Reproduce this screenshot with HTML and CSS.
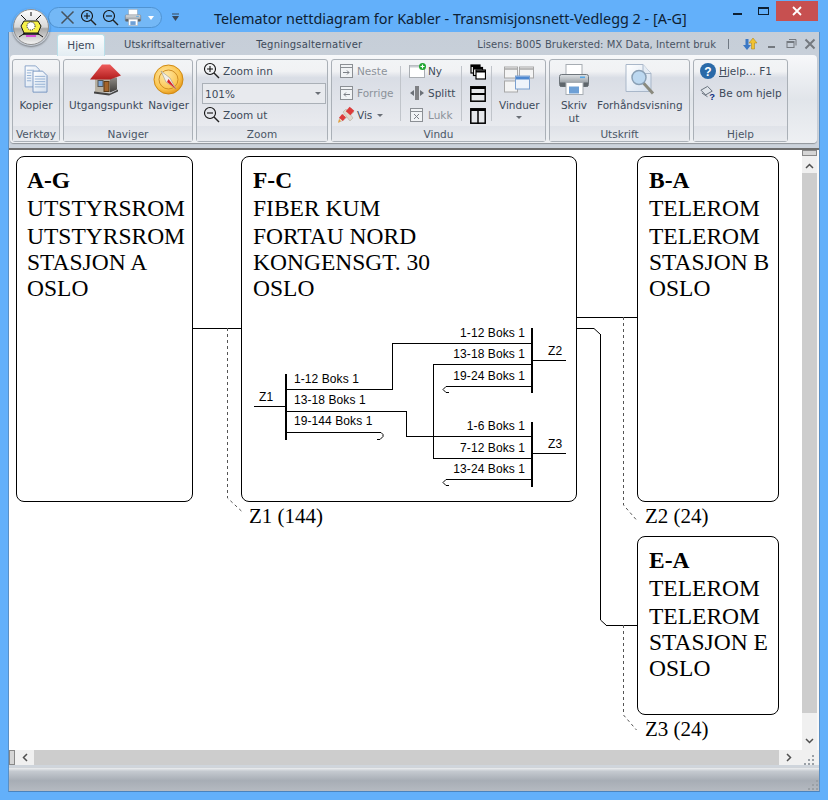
FILE: index.html
```html
<!DOCTYPE html>
<html lang="no">
<head>
<meta charset="utf-8">
<title>Telemator nettdiagram</title>
<link rel="stylesheet" href="styles.css">
</head>
<body>
<svg class="defs" width="0" height="0" aria-hidden="true">
  <defs>
    <linearGradient id="paper" x1="0" y1="0" x2="1" y2="1"><stop offset="0" stop-color="#fff"/><stop offset="1" stop-color="#d3dfee"/></linearGradient>
    <linearGradient id="roof" x1="0" y1="0" x2="0" y2="1"><stop offset="0" stop-color="#ef5c5c"/><stop offset="1" stop-color="#b11d1d"/></linearGradient>
    <linearGradient id="wall" x1="0" y1="0" x2="0" y2="1"><stop offset="0" stop-color="#8d8a85"/><stop offset="1" stop-color="#3f3d3b"/></linearGradient>
    <radialGradient id="gold" cx=".4" cy=".35" r=".7"><stop offset="0" stop-color="#ffe9a8"/><stop offset=".7" stop-color="#fbc44d"/><stop offset="1" stop-color="#e08f12"/></radialGradient>
    <linearGradient id="printer" x1="0" y1="0" x2="0" y2="1"><stop offset="0" stop-color="#dfe3e6"/><stop offset="1" stop-color="#7d848b"/></linearGradient>
    <linearGradient id="orb" x1="0" y1="0" x2="0" y2="1"><stop offset="0" stop-color="#fff"/><stop offset=".5" stop-color="#d8d8d8"/><stop offset=".55" stop-color="#a8a8a8"/><stop offset="1" stop-color="#f4f4f4"/></linearGradient>
    <symbol id="i-zin" viewBox="0 0 17 17"><circle cx="7" cy="7" r="5.500" fill="none" stroke="#111" stroke-width="1.100"/><path d="M4 7h6M7 4v6" stroke="#111" stroke-width="1.100"/><path d="M11 11l5 5" stroke="#222" stroke-width="1.400"/></symbol>
    <symbol id="i-zout" viewBox="0 0 17 17"><circle cx="7" cy="7" r="5.500" fill="none" stroke="#111" stroke-width="1.100"/><path d="M4 7h6" stroke="#111" stroke-width="1.100"/><path d="M11 11l5 5" stroke="#222" stroke-width="1.400"/></symbol>
    <symbol id="i-win-next" viewBox="0 0 16 16"><rect x="1.500" y="1.500" width="12" height="13" fill="#f1f3f5" stroke="#8b8f94"/><path d="M2 4.500h11" stroke="#8b8f94"/><path d="M4 9.500h6M8 7.500l2 2-2 2" fill="none" stroke="#7c8086"/></symbol>
    <symbol id="i-win-prev" viewBox="0 0 16 16"><rect x="1.500" y="1.500" width="12" height="13" fill="#f1f3f5" stroke="#8b8f94"/><path d="M2 4.500h11" stroke="#8b8f94"/><path d="M11 9.500H5M7 7.500l-2 2 2 2" fill="none" stroke="#7c8086"/></symbol>
    <symbol id="i-win-close" viewBox="0 0 16 16"><rect x="1.500" y="1.500" width="12" height="13" fill="#f1f3f5" stroke="#8b8f94"/><path d="M2 4.500h11" stroke="#8b8f94"/><path d="M5 7l5 5M10 7l-5 5" stroke="#7c8086"/></symbol>
    <symbol id="i-printer" viewBox="0 0 32 32"><rect x="8" y="1" width="16" height="11" fill="#fff" stroke="#a7adb3"/><rect x="1.500" y="11" width="29" height="12" rx="2" fill="url(#printer)" stroke="#6f767c"/><rect x="2" y="19" width="28" height="4" fill="#5f666c"/><rect x="8" y="19" width="17" height="12" fill="#fff" stroke="#a7adb3"/><rect x="11" y="23" width="10" height="7" fill="#6ea0d6"/><rect x="22" y="13" width="5" height="1.600" fill="#55a7e8"/></symbol>
    <symbol id="i-dots" viewBox="0 0 11 10"><g fill="#9aa0a6"><rect x="8" y="0" width="2" height="2"/><rect x="4" y="4" width="2" height="2"/><rect x="8" y="4" width="2" height="2"/><rect x="0" y="8" width="2" height="2"/><rect x="4" y="8" width="2" height="2"/><rect x="8" y="8" width="2" height="2"/></g></symbol>
  </defs>
</svg>

<div class="window">
  <header class="titlebar">
    <div class="qat">
      <svg class="qat-x" width="15" height="15" viewBox="0 0 15 15"><path d="M1.500 1.500l12 12M13.500 1.500l-12 12" stroke="#46535f" stroke-width="1.500"/></svg>
      <svg class="ico17" width="17" height="17"><use href="#i-zin"/></svg>
      <svg class="ico17" width="17" height="17"><use href="#i-zout"/></svg>
      <svg class="qat-p" width="18" height="17"><use href="#i-printer"/></svg>
      <span class="qat-drop"></span>
    </div>
    <svg class="qat-more" width="7" height="9" viewBox="0 0 7 9"><path d="M0 1h7" stroke="#39485a"/><path d="M0 3h7L3.500 8z" fill="#39485a"/></svg>
    <h1 class="title">Telemator nettdiagram for Kabler - Transmisjonsnett-Vedlegg 2 - [A-G]</h1>
    <div class="winctl">
      <span class="min"></span>
      <span class="max"></span>
      <span class="close"><svg width="10" height="10" viewBox="0 0 10 10"><path d="M1 1l8 8M9 1l-8 8" stroke="#fff" stroke-width="1.800"/></svg></span>
    </div>
  </header>

  <div class="orb" aria-hidden="true">
    <svg width="36" height="36" viewBox="0 0 36 36">
      <circle cx="18" cy="18" r="17.500" fill="url(#orb)" stroke="#8f8f8f"/>
      <path d="M8 6l5 5M28 6l-5 5M6 28l6-4M30 28l-6-4M18 3v4" stroke="#111" stroke-width="1"/>
      <path d="M11 12h14l3 5-3 7H11l-3-7z" fill="#f6f04a" stroke="#111"/>
      <circle cx="18" cy="17" r="4" fill="#fff" stroke="#111" stroke-dasharray="1 1"/>
      <path d="M10 25h16" stroke="#111" stroke-width="1.500"/>
      <rect x="13" y="26" width="10" height="2" fill="#d64fd6"/>
    </svg>
  </div>

  <div class="chrome">
    <nav class="tabs">
      <span class="tab active">Hjem</span>
      <span class="tab">Utskriftsalternativer</span>
      <span class="tab t3">Tegningsalternativer</span>
      <span class="lic">Lisens: B005 Brukersted: MX Data, Internt bruk</span>
      <span class="sep-bar"></span>
      <svg class="updn" width="16" height="16" viewBox="0 0 16 16"><path d="M5 14l-4-5h2.500V3h3v6H9z" fill="#3b78c4"/><path d="M11 2l4 5h-2.500v6h-3V7H7z" fill="#f2c230" stroke="#a57e12" stroke-width=".5"/></svg>
      <svg class="mini m1" width="12" height="12" viewBox="0 0 12 12"><path d="M2 9h7" stroke="#74797f" stroke-width="2"/></svg>
      <svg class="mini m2" width="12" height="12" viewBox="0 0 12 12"><rect x="1" y="3.500" width="7" height="6" fill="none" stroke="#74797f"/><path d="M1 4h7" stroke="#74797f" stroke-width="2"/><path d="M3 1.500h7v6" fill="none" stroke="#74797f"/></svg>
      <svg class="mini m3" width="12" height="12" viewBox="0 0 12 12"><path d="M1.500 1.500l9 9M10.500 1.500l-9 9" stroke="#74797f" stroke-width="2"/></svg>
    </nav>

    <section class="ribbon">
      <div class="group g-verk">
        <div class="group-body col-center">
          <svg class="big" width="25" height="28" viewBox="0 0 28 32">
            <path d="M1 1h12l4 4v20H1z" fill="url(#paper)" stroke="#7f9cc5"/>
            <path d="M10 7h11l5 5v19H10z" fill="url(#paper)" stroke="#6e8fbd"/>
            <path d="M3 6h8M3 9h5M3 12h5M3 15h5M3 18h5M12 13h12M12 16h12M12 19h12M12 22h12M12 25h12" stroke="#8caad0"/>
          </svg>
          <span class="lbl">Kopier</span>
        </div>
        <div class="group-name">Verktøy</div>
      </div>

      <div class="group g-nav">
        <div class="group-body g-nav-body">
          <div class="bigbtn">
            <svg class="big" width="32" height="32" viewBox="0 0 32 32">
              <path d="M5 14L16 6l11 8v12l-7 2H5z" fill="#d9d3c4"/>
              <path d="M20 15l7-1v12l-7 3z" fill="url(#wall)"/>
              <path d="M5 15h15v14H5z" fill="#b8b1a3"/>
              <rect x="8" y="17" width="5" height="6" fill="#7ea8d8" stroke="#555"/>
              <rect x="14" y="18" width="5" height="10" fill="#a4642b" stroke="#5a3a18"/>
              <path d="M0 16L12 1h8l11 11-11 4z" fill="url(#roof)"/>
              <path d="M4 28l16 2 8-4v2l-9 4-15-2z" fill="#444"/>
            </svg>
            <span class="lbl">Utgangspunkt</span>
          </div>
          <div class="bigbtn">
            <svg class="big" width="31" height="32" viewBox="0 0 31 31">
              <circle cx="15.500" cy="15.500" r="14.500" fill="url(#gold)" stroke="#d08a12"/>
              <circle cx="15.500" cy="15.500" r="9.500" fill="none" stroke="#cf8e25"/>
              <path d="M8 7l9 7 6 11-10-7z" fill="#f3efe6" stroke="#8a8a8a" stroke-width=".5"/>
              <path d="M15.500 15l7.500 10-9-7z" fill="#d8232a"/>
            </svg>
            <span class="lbl">Naviger</span>
          </div>
        </div>
        <div class="group-name">Naviger</div>
      </div>

      <div class="group g-zoom">
        <div class="group-body col-stack">
          <div class="row-btn"><svg width="17" height="17"><use href="#i-zin"/></svg><span class="lbl">Zoom inn</span></div>
          <div class="combo"><span>101%</span><i class="caret"></i></div>
          <div class="row-btn"><svg width="17" height="17"><use href="#i-zout"/></svg><span class="lbl">Zoom ut</span></div>
        </div>
        <div class="group-name">Zoom</div>
      </div>

      <div class="group g-vindu">
        <div class="group-body g-vindu-body">
          <div class="vcol w-a">
            <div class="row-sm"><svg width="16" height="16"><use href="#i-win-next"/></svg><span class="lbl dim">Neste</span></div>
            <div class="row-sm"><svg width="16" height="16"><use href="#i-win-prev"/></svg><span class="lbl dim">Forrige</span></div>
            <div class="row-sm vis">
              <svg width="18" height="18" viewBox="0 0 18 18"><path d="M2 16l3-1 12-9-3-4L3 12z" fill="#f3ece2" stroke="#c9c2b8"/><path d="M9 3l7 9-3 3-7-9z" fill="#e0d9cf" stroke="#c9c2b8"/><rect x="10" y="2" width="6" height="6" transform="rotate(40 13 5)" fill="#dd3b3b"/><rect x="3" y="9" width="5" height="5" transform="rotate(40 5.500 11.500)" fill="#dd3b3b"/><path d="M1 17l3-2-2-2z" fill="#e6a13a"/></svg>
              <span class="lbl">Vis</span><i class="caret"></i>
            </div>
          </div>
          <span class="vsep s1"></span>
          <div class="vcol w-b">
            <div class="row-sm ny"><svg width="18" height="16" viewBox="0 0 18 16"><rect x=".5" y="2.500" width="15" height="12" fill="#fff" stroke="#a9adb2"/><path d="M1 3.500h14" stroke="#c8ccd1" stroke-width="2"/><circle cx="13.500" cy="3.500" r="3.500" fill="#1fa52f"/><path d="M11.500 3.500h4M13.500 1.500v4" stroke="#fff" stroke-width="1.200"/></svg><span class="lbl">Ny</span></div>
            <div class="row-sm"><svg width="16" height="16" viewBox="0 0 16 16"><path d="M7 1v14M9 1v14" stroke="#222" stroke-width="1"/><path d="M1 8l4-3v6zM15 8l-4-3v6z" fill="#6b7077"/></svg><span class="lbl">Splitt</span></div>
            <div class="row-sm"><svg width="16" height="16"><use href="#i-win-close"/></svg><span class="lbl dim">Lukk</span></div>
          </div>
          <span class="vsep s2"></span>
          <div class="vcol w-c">
            <svg width="16" height="16" viewBox="0 0 16 16"><g fill="#fff" stroke="#000" stroke-width="1.200"><rect x="1" y="1" width="9" height="8"/><rect x="3.500" y="3.500" width="9" height="8"/><rect x="6" y="6" width="9.500" height="9"/></g><path d="M1 2h9M3.500 4.500h9M6 7.500h9.500" stroke="#000" stroke-width="2"/></svg>
            <svg width="16" height="16" viewBox="0 0 16 16"><rect x=".8" y=".8" width="14.400" height="14.400" fill="#e6e8eb" stroke="#000" stroke-width="1.500"/><path d="M1 2h14M1 8h14" stroke="#000" stroke-width="2"/></svg>
            <svg width="16" height="16" viewBox="0 0 16 16"><rect x=".8" y=".8" width="14.400" height="14.400" fill="#e6e8eb" stroke="#000" stroke-width="1.500"/><path d="M1 2h14" stroke="#000" stroke-width="2"/><path d="M8 2v14" stroke="#000" stroke-width="1.500"/></svg>
          </div>
          <span class="vsep s3"></span>
          <div class="bigbtn vind">
            <svg class="big" width="30" height="26" viewBox="0 0 30 26"><g fill="#f4f4f4" stroke="#a7a7a7"><rect x=".5" y=".5" width="13" height="11"/><rect x="15.500" y=".5" width="14" height="11"/><rect x=".5" y="14.500" width="13" height="11"/></g><path d="M1 2.500h12M16 2.500h13" stroke="#bbb" stroke-width="2"/><rect x="11.500" y="9.500" width="14" height="13" fill="#eef3fa" stroke="#7aa0d0"/><path d="M12 11.500h13" stroke="#4d87d0" stroke-width="3"/></svg>
            <span class="lbl">Vinduer</span>
            <i class="caret"></i>
          </div>
        </div>
        <div class="group-name">Vindu</div>
      </div>

      <div class="group g-print">
        <div class="group-body g-print-body">
          <div class="bigbtn skriv">
            <svg class="big" width="32" height="32"><use href="#i-printer"/></svg>
            <span class="lbl">Skriv<br>ut</span>
          </div>
          <div class="bigbtn">
            <svg class="big" width="32" height="32" viewBox="0 0 32 32">
              <path d="M2 1h17l8 9v18H2z" fill="url(#paper)" stroke="#a9b7c9"/>
              <path d="M19 1v9h8" fill="#e5ecf4" stroke="#a9b7c9"/>
              <path d="M19 19l10 11" stroke="#8a8a7e" stroke-width="3"/>
              <circle cx="15" cy="14" r="7" fill="#bcd8f0" stroke="#8aa0b5" stroke-width="1.500"/>
            </svg>
            <span class="lbl">Forhåndsvisning</span>
          </div>
        </div>
        <div class="group-name">Utskrift</div>
      </div>

      <div class="group g-help">
        <div class="group-body col-stack help">
          <div class="row-sm"><svg width="16" height="16" viewBox="0 0 16 16"><circle cx="8" cy="8" r="8" fill="#2a6aa8"/><text x="8" y="12.500" class="qm">?</text></svg><span class="lbl"><u>H</u>jelp... F1</span></div>
          <div class="row-sm"><svg width="16" height="16" viewBox="0 0 17 16"><path d="M1 5l7-4 5 5-7 4z" fill="#dfe4ea" stroke="#606a75"/><path d="M2 8l6 4" stroke="#606a75"/><text x="13" y="15" class="qm2">?</text></svg><span class="lbl">Be om hjelp</span></div>
        </div>
        <div class="group-name">Hjelp</div>
      </div>
    </section>

    <main class="workspace">
      <div class="viewport">
        <div class="canvas">
          <article class="node n-ag"><b>A-G</b><span>UTSTYRSROM</span><span>UTSTYRSROM</span><span>STASJON A</span><span>OSLO</span></article>
          <article class="node n-fc"><b>F-C</b><span>FIBER KUM</span><span>FORTAU NORD</span><span>KONGENSGT. 30</span><span>OSLO</span></article>
          <article class="node n-ba"><b>B-A</b><span>TELEROM</span><span>TELEROM</span><span>STASJON B</span><span>OSLO</span></article>
          <article class="node n-ea"><b>E-A</b><span>TELEROM</span><span>TELEROM</span><span>STASJON E</span><span>OSLO</span></article>

          <svg class="wires" width="793" height="600" viewBox="9 150 793 600">
            <g fill="none" stroke="#000" stroke-width="1" shape-rendering="crispEdges">
              <path d="M192 328.500h49M577 317.500h60M577 328.500h17"/>
              <path d="M600.500 334v286M606 625.500h31"/>
              <path d="M254 406.500h32M286 389.500h106.500v-46H532M286 411.500h120.500v25H532M286 432.500h92"/>
              <path d="M433.500 364.500H532M433.500 364v94.500H532M450 386.500h82M450 479.500h82"/>
              <path d="M532 360.500h34M532 453.500h34"/>
            </g>
            <g fill="none" stroke="#000" stroke-width="1">
              <path d="M594 328.500l6.500 6M600.500 620l6 5.500"/>
              <path d="M378 432.500h3l2 2v2l-3 3h-3M450 386.500h-4l-3 3 3 3h3M450 479.500h-4l-3 3 3 3h3"/>
            </g>
            <g fill="none" stroke="#000" stroke-width="2" shape-rendering="crispEdges">
              <path d="M286 374v66M532 328v65M532 422v65"/>
            </g>
            <g fill="none" stroke="#555" stroke-width="1" stroke-dasharray="3 3">
              <path d="M227.500 328v170l16 15M623.500 317v188l13 15M623.500 625v90l13 15"/>
            </g>
          </svg>

          <span class="cable c-z1">Z1 (144)</span>
          <span class="cable c-z2">Z2 (24)</span>
          <span class="cable c-z3">Z3 (24)</span>

          <span class="port l1">1-12 Boks 1</span>
          <span class="port l2">13-18 Boks 1</span>
          <span class="port l3">19-144 Boks 1</span>
          <span class="port r1">1-12 Boks 1</span>
          <span class="port r2">13-18 Boks 1</span>
          <span class="port r3">19-24 Boks 1</span>
          <span class="port r4">1-6 Boks 1</span>
          <span class="port r5">7-12 Boks 1</span>
          <span class="port r6">13-24 Boks 1</span>
          <span class="port zz1">Z1</span>
          <span class="port zz2">Z2</span>
          <span class="port zz3">Z3</span>
        </div>
        <div class="vscroll">
          <span class="grip"></span>
          <svg class="arr up" width="9" height="6" viewBox="0 0 9 6"><path d="M1 5l3.500-3.500L8 5" fill="none" stroke="#505050" stroke-width="1.500"/></svg>
          <span class="vtrack"></span>
          <svg class="arr down" width="9" height="6" viewBox="0 0 9 6"><path d="M1 1l3.500 3.500L8 1" fill="none" stroke="#505050" stroke-width="1.500"/></svg>
        </div>
      </div>
      <div class="hscroll">
        <span class="hgrip"></span>
        <svg class="arr left" width="6" height="9" viewBox="0 0 6 9"><path d="M5 1L1.500 4.500 5 8" fill="none" stroke="#505050" stroke-width="1.500"/></svg>
        <span class="htrack"></span>
        <svg class="arr right" width="6" height="9" viewBox="0 0 6 9"><path d="M1 1l3.500 3.500L1 8" fill="none" stroke="#505050" stroke-width="1.500"/></svg>
        <svg class="corner" width="11" height="10"><use href="#i-dots"/></svg>
      </div>
    </main>
    <footer class="status"><svg class="corner2" width="11" height="10"><use href="#i-dots"/></svg></footer>
  </div>
</div>
</body>
</html>
```

FILE: styles.css
```css
* { box-sizing: border-box; }
html, body { margin: 0; padding: 0; background: #63b0fa; }
.defs { position: absolute; }
.window {
  position: relative;
  width: 828px; height: 800px;
  background: #63b0fa;
  display: flex; flex-direction: column;
  overflow: hidden;
  padding: 0 8px 8px 8px;
  font-family: "DejaVu Sans", sans-serif;
  font-size: 10.500px;
  color: #3d4a5a;
}
.titlebar { height: 32px; display: flex; align-items: flex-start; position: relative; flex: none; }
.qat {
  margin: 7px 0 0 40px; height: 21px; width: 114px; flex: none;
  display: flex; align-items: center; gap: 5px; padding-left: 11px;
  background: #74b8f6;
  border: 1px solid #4f93d2; border-radius: 11px;
}
.qat svg { display: block; flex: none; }
.qat-drop { width: 0; height: 0; border: 3px solid transparent; border-top: 4px solid #fff; margin: 3px 0 0 1px; }
.qat-more { margin: 13px 0 0 10px; }
.title {
  position: absolute; left: 206px; top: 9px; margin: 0;
  font: 400 14.400px "Noto Sans", sans-serif; color: #0e2033; white-space: nowrap;
}
.winctl { position: absolute; right: 2px; top: 0; display: flex; align-items: flex-start; }
.min { width: 9px; height: 2px; background: #0e2033; margin: 13px 16px 0 0; }
.max { width: 11px; height: 8px; border: 1px solid #0e2033; border-top-width: 2px; margin: 7px 7px 0 0; }
.close { width: 42px; height: 20px; background: #c75050; display: flex; align-items: center; justify-content: center; margin-top: 1px; }
.orb { position: absolute; left: 12px; top: 8px; width: 38px; height: 38px; z-index: 3; border-radius: 50%; box-shadow: 0 1px 2px rgba(0,0,0,.4); }
.orb svg { display: block; margin: 1px; }

.chrome {
  flex: 1; min-height: 0;
  display: flex; flex-direction: column;
  border-left: 1px solid #5a8fc4; border-right: 1px solid #5a8fc4; border-bottom: 1px solid #4a83bd;
  background: linear-gradient(#c6ced8 0, #ccd3dc 100px);
}
.tabs { height: 24px; flex: none; display: flex; align-items: flex-end; position: relative; padding-left: 48px; font-size: 10px; color: #3d4a5a; }
.tab { height: 22px; display: flex; align-items: center; padding: 0 0 2px; margin-right: 31px; letter-spacing: .06px; }
.tab.active {
  width: 48px; justify-content: center; margin-right: 19px; letter-spacing: 0;
  background: linear-gradient(#fcfdfe, #e3edf3);
  border: 1px solid #b9dfe9; border-bottom: 0; border-radius: 3px 3px 0 0;
  font-size: 10.500px;
}
.tab.t3 { letter-spacing: .2px; margin-right: 0; }
.lic { margin-left: auto; font-size: 10px; align-self: center; color: #475363; letter-spacing: .05px; }
.sep-bar { width: 1px; height: 10px; background: #6f7883; align-self: center; margin: 0 13px 0 12px; }
.updn { align-self: center; margin: 0; flex: none; }
.mini { align-self: center; margin: 0; flex: none; }
.m1 { margin-left: 8px; }
.m2 { margin-left: 8px; }
.m3 { margin-left: 6px; margin-right: 3px; }

.ribbon {
  height: 88px; flex: none; margin: -1px 2px 1px 1px;
  display: flex; gap: 3px; padding: 4px 2px 1px 2px;
  background: linear-gradient(#f7f8fa, #e1e5ea 50%, #eef0f3);
  border-radius: 4px;
  box-shadow: 0 1px 1px rgba(0,0,0,.3);
}
.group {
  flex: none; display: flex; flex-direction: column;
  border: 1px solid #aab0b7; border-radius: 3px;
  background: linear-gradient(#f2f4f6 0, #f1f2f4 14%, #d9dde5 22%, #e6e8ed 70%, #eceef1 100%);
}
.group-body { flex: 1; min-height: 0; }
.group-name {
  height: 15px; flex: none; text-align: center; line-height: 17px; font-size: 10.500px; color: #4a5666;
  background: linear-gradient(#dfe2e8, #e9ebef);
}
.g-verk { width: 48px; }
.g-nav { width: 130px; }
.g-zoom { width: 132px; }
.g-vindu { width: 215px; }
.g-print { width: 141px; }
.g-help { width: 95px; }
.lbl { white-space: nowrap; font-size: 10.500px; }
.dim { color: #8c929a; }
.big { display: block; }
.col-center { display: flex; flex-direction: column; align-items: center; padding-top: 5px; }
.col-center .big { margin-bottom: 3px; }
.col-center .lbl { margin-top: 3px; line-height: 13px; }
.g-nav-body { display: flex; justify-content: space-between; padding: 3px 3px 0 5px; }
.bigbtn { display: flex; flex-direction: column; align-items: center; }
.bigbtn .big { height: 33px; margin-bottom: 2px; }
.bigbtn .lbl { line-height: 13px; text-align: center; margin-top: 1px; }
.col-stack { display: flex; flex-direction: column; gap: 2px; padding: 1px 2px 0 6px; }
.row-btn { height: 19px; display: flex; align-items: center; gap: 3px; }
.combo {
  height: 21px; width: 124px; margin: 1px 0 -1px -1px;
  display: flex; align-items: center; justify-content: space-between; padding: 0 4px 0 2px;
  border: 1px solid #aab0b7; background: #e8eaee;
}
.caret { display: inline-block; width: 0; height: 0; border: 3px solid transparent; border-top: 3px solid #6a6f76; margin-top: 3px; }
.g-vindu-body { display: flex; padding: 0 0 0 4px; }
.vcol { display: flex; flex-direction: column; flex: none; }
.row-sm { height: 22px; display: flex; align-items: center; gap: 2px; flex: none; }
.w-a { width: 64px; padding-left: 3px; }
.w-b { width: 52px; }
.w-b .row-sm { gap: 3px; }
.w-b .ny { gap: 1px; }
.w-c { width: 16px; gap: 6px; margin-top: 4px; }
.w-a .vis { margin-left: -2px; }
.vis .caret { margin-left: 3px; }
.vsep { width: 1px; height: 55px; background: #c0c4ca; margin-top: 6px; flex: none; }
.s1 { margin-right: 8px; }
.s2 { margin-right: 8px; }
.s3 { margin-left: 5px; margin-right: 7px; }
.vind { padding-top: 3px; }
.vind .caret { margin-top: 4px; }
.g-print-body { display: flex; padding: 3px 0 0 8px; gap: 7px; }
.skriv { width: 32px; }
.help { gap: 0; padding: 0 0 0 6px; }
.help .row-sm { height: 22px; gap: 3px; }
.qm { font: 700 12px "Liberation Sans", sans-serif; fill: #fff; text-anchor: middle; }
.qm2 { font: 700 10px "Liberation Sans", sans-serif; fill: #0b2a7d; text-anchor: middle; }

.workspace { flex: 1; min-height: 0; display: flex; flex-direction: column; background: #cfd5dc; border-top: 2px solid #6e6e6e; margin-top: 4px; }
.viewport { flex: 1; min-height: 0; display: flex; }
.canvas { position: relative; flex: 1; min-width: 0; background: #fff; overflow: hidden; }
.wires { position: absolute; left: 0; top: 0; }
.node {
  position: absolute; background: #fff;
  border: 1px solid #000; border-radius: 8px;
  padding: 10px 0 0 11px;
  display: flex; flex-direction: column;
  font: 23.500px/26px "Liberation Serif", serif; color: #000;
}
.node b { font-weight: 700; }
.node span { white-space: nowrap; }
.node span:nth-of-type(-n+2) { margin-top: 2px; }
.n-ag { left: 7px; top: 6px; width: 177px; height: 346px; padding-left: 10px; }
.n-fc { left: 232px; top: 6px; width: 336px; height: 346px; }
.n-ba { left: 628px; top: 6px; width: 142px; height: 346px; }
.n-ea { left: 628px; top: 386px; width: 142px; height: 179px; }
.cable { position: absolute; font: 21px/24px "Liberation Serif", serif; color: #000; white-space: nowrap; }
.c-z1 { left: 240px; top: 354px; }
.c-z2 { left: 636px; top: 354px; }
.c-z3 { left: 636px; top: 567px; }
.port { position: absolute; font: 12px/14px "Liberation Sans", sans-serif; letter-spacing: .08px; color: #000; white-space: nowrap; }
.l1 { left: 285px; top: 222px; }
.l2 { left: 285px; top: 243px; }
.l3 { left: 285px; top: 264px; }
.r1, .r2, .r3, .r4, .r5, .r6 { right: 277px; }
.r1 { top: 176px; }
.r2 { top: 197px; }
.r3 { top: 219px; }
.r4 { top: 269px; }
.r5 { top: 291px; }
.r6 { top: 312px; }
.zz1 { left: 250px; top: 240px; }
.zz2 { left: 539px; top: 194px; }
.zz3 { left: 539px; top: 287px; }

.vscroll { width: 17px; flex: none; display: flex; flex-direction: column; align-items: center; background: #f0f0f0; border-right: 2px solid #f8f8f8; }
.grip { width: 15px; height: 6px; background: #d5d5d5; border: 1px solid #888; flex: none; }
.vtrack { flex: 1; width: 15px; background: #cdcdcd; margin: 4px 0 25px; }
.arr { flex: none; display: block; }
.up { margin-top: 7px; }
.down { margin-bottom: 6px; }
.hscroll { height: 15px; flex: none; display: flex; align-items: center; background: #f0f0f0; margin-bottom: 2px; box-sizing: content-box; }
.hgrip { width: 6px; height: 15px; background: #d5d5d5; border: 1px solid #888; flex: none; }
.left { margin: 0 6px 0 7px; }
.right { margin: 0 12px 0 7px; }
.htrack { flex: 1; height: 15px; background: #cdcdcd; }
.corner { margin-right: 4px; flex: none; margin-top: 4px; }
.status { height: 24px; flex: none; display: flex; justify-content: flex-end; align-items: flex-end; background: linear-gradient(#eceef0 0, #c5cad0 14%, #a7adb5 55%, #b5bac1 100%); border-top: 1px solid #d0d4d9; }
.corner2 { display: block; margin-bottom: 1px; }
```
